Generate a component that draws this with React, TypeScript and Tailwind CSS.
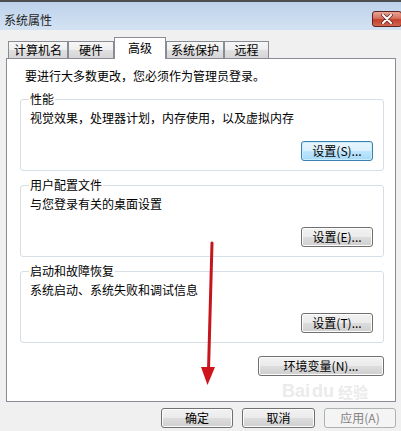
import { ReactElement, ReactNode } from 'react'

type BtnProps = {
  children: ReactNode
  className?: string
  kind?: 'normal' | 'focus' | 'disabled'
}

const WinButton = ({ children, className = '', kind = 'normal' }: BtnProps): ReactElement => {
  const look =
    kind === 'focus'
      ? 'border-[#3c7fb1] bg-[linear-gradient(#eaf6fd_0%,#d9f0fc_50%,#bee6fd_50%,#a7d9f5_100%)] shadow-[inset_0_0_0_1px_#c5ecff] text-black'
      : kind === 'disabled'
        ? 'border-[#adb2b5] bg-[#f4f4f4] text-[#838383]'
        : 'border-[#707070] bg-[linear-gradient(#f2f2f2_0%,#ebebeb_50%,#dddddd_50%,#cfcfcf_100%)] shadow-[inset_0_0_0_1px_#fcfcfc] text-black'

  return (
    <div
      className={`flex h-[20px] items-center justify-center rounded-[3px] border text-[12px] leading-none ${look} ${className}`}
    >
      {children}
    </div>
  )
}

type GroupProps = {
  title: string
  text: string
  button: string
  focused?: boolean
  className?: string
}

const Group = ({ title, text, button, focused, className = '' }: GroupProps): ReactElement => (
  <fieldset
    className={`ml-[13px] w-[364px] rounded-[3px] border border-[#d5dfe5] pr-[10px] pb-[9px] pl-[9px] ${className}`}
  >
    <legend className="ml-[-1px] px-[1px] leading-[16px]">{title}</legend>
    <div className="mt-[3px] leading-[16px]">{text}</div>
    <div className="mt-[15px] flex justify-end">
      <WinButton kind={focused ? 'focus' : 'normal'} className="w-[72px]">
        {button}
      </WinButton>
    </div>
  </fieldset>
)

const tabs = [
  { name: '计算机名', w: 'w-[60px]' },
  { name: '硬件', w: 'w-[46px]' },
  { name: '高级', w: 'w-[52px]', active: true },
  { name: '系统保护', w: 'w-[58px]' },
  { name: '远程', w: 'w-[45px]' },
]

const App = (): ReactElement => {
  return (
    <div
      className="relative h-[431px] w-[401px] overflow-hidden bg-[#f0f0f0] text-[12px] text-black"
      style={{ fontFamily: '"Noto Sans CJK SC", "Liberation Sans", sans-serif' }}
    >
      {/* title bar */}
      <div className="flex h-[30px] items-end justify-between border-t-2 border-[#4d4d4d] bg-[linear-gradient(#bcd1ea,#cbdcf0_60%,#d3e2f2)] pb-[3px] pl-[4px]">
        <span className="leading-[14px] text-[#1e1e1e]">系统属性</span>
        <div className="mr-[-1px] flex h-[16px] w-[30px] items-center justify-center rounded-[3px] border border-[#5b2420] bg-[linear-gradient(#e8a493_0%,#d7705f_45%,#c2402c_55%,#d06850_100%)]">
          <svg width="12" height="10" viewBox="0 0 12 10">
            <path d="M2 1 L10 9 M10 1 L2 9" stroke="#6b2a22" strokeWidth="3.6" strokeLinecap="round" />
            <path d="M2 1 L10 9 M10 1 L2 9" stroke="#ffffff" strokeWidth="2" strokeLinecap="round" />
          </svg>
        </div>
      </div>

      {/* tabs */}
      <div className="flex items-end pl-[8px] pt-[7px]">
        {tabs.map((t) =>
          t.active ? (
            <div
              key={t.name}
              className={`relative z-10 mb-[-1px] flex h-[22px] ${t.w} items-center justify-center border border-b-0 border-[#898c95] bg-white pb-[1px]`}
            >
              {t.name}
            </div>
          ) : (
            <div
              key={t.name}
              className={`flex h-[17px] ${t.w} items-center justify-center border border-b-0 border-[#898c95] bg-[linear-gradient(#f7f7f7_0%,#eeeeee_50%,#e0e0e0_50%,#d6d6d6_100%)] leading-none`}
            >
              {t.name}
            </div>
          ),
        )}
      </div>

      {/* tab panel */}
      <div className="ml-[6px] h-[344px] w-[390px] border border-[#898c95] bg-white pt-[9px]">
        <div className="pl-[18px] leading-[16px]">要进行大多数更改，您必须作为管理员登录。</div>
        <Group
          className="mt-[7px]"
          title="性能"
          text="视觉效果，处理器计划，内存使用，以及虚拟内存"
          button="设置(S)..."
          focused
        />
        <Group className="mt-[6px]" title="用户配置文件" text="与您登录有关的桌面设置" button="设置(E)..." />
        <Group
          className="mt-[6px]"
          title="启动和故障恢复"
          text="系统启动、系统失败和调试信息"
          button="设置(T)..."
        />
        <div className="mt-[13px] flex justify-end pr-[11px]">
          <WinButton className="w-[126px]">环境变量(N)...</WinButton>
        </div>
      </div>

      {/* dialog buttons */}
      <div className="mt-[6px] flex justify-end gap-[9px] pr-[5px]">
        <WinButton className="w-[72px]">确定</WinButton>
        <WinButton className="w-[73px]">取消</WinButton>
        <WinButton kind="disabled" className="w-[72px]">
          应用(A)
        </WinButton>
      </div>

      {/* watermark */}
      <div className="pointer-events-none absolute left-[282px] top-[380px] flex items-end gap-[2px] text-[#ebebeb]">
        <span className="text-[18px] font-bold leading-[22px]" style={{ fontFamily: '"Liberation Sans", sans-serif' }}>
          Bai
        </span>
        <span className="text-[18px] font-bold leading-[22px]" style={{ fontFamily: '"Liberation Sans", sans-serif' }}>
          du
        </span>
        <span className="ml-[2px] text-[15px] font-bold leading-[20px]">经验</span>
      </div>

      {/* red arrow annotation */}
      <svg className="pointer-events-none absolute left-0 top-0" width="401" height="431">
        <path d="M212 243 L208.5 370" stroke="#c4161c" strokeWidth="3" strokeLinecap="round" />
        <polygon points="201,367 215,367 207.5,385" fill="#d0141c" />
      </svg>
    </div>
  )
}

export default App
